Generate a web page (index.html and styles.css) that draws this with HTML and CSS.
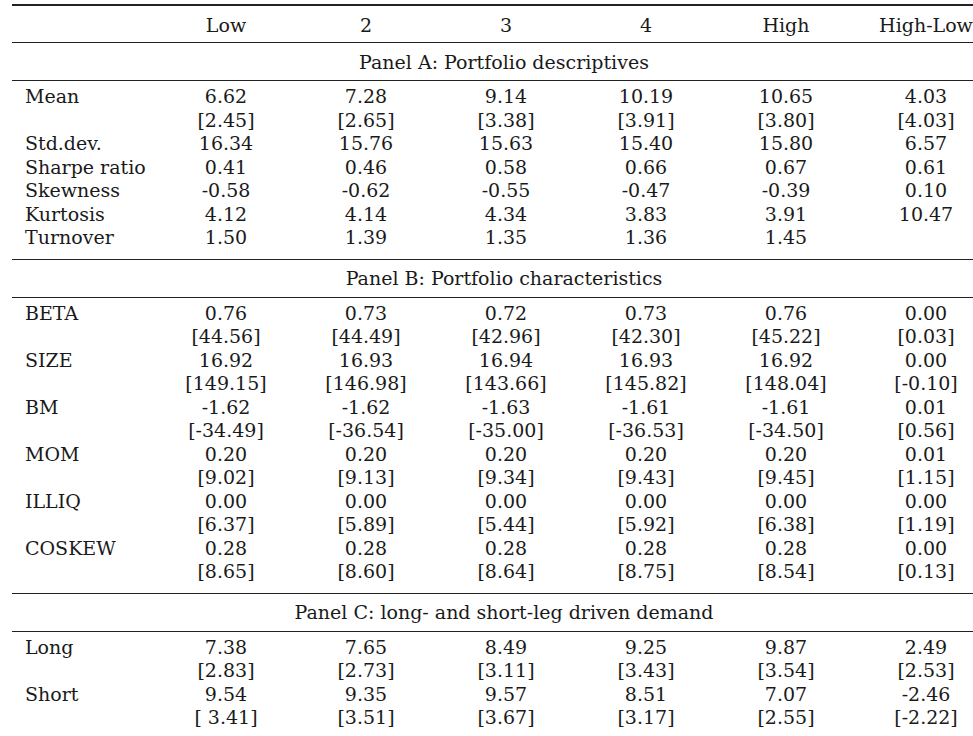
FILE: index.html
```html
<!DOCTYPE html>
<html>
<head>
<meta charset="utf-8">
<link rel="stylesheet" href="styles.css">
</head>
<body>
<table class="results">
  <colgroup>
    <col class="c-label"><col class="c-num"><col class="c-num"><col class="c-num"><col class="c-num"><col class="c-num"><col class="c-num">
  </colgroup>
  <tbody>
    <tr class="head">
      <td class="lbl"></td><td>Low</td><td>2</td><td>3</td><td>4</td><td>High</td><td class="hl">High-Low</td>
    </tr>
    <tr class="panel"><td colspan="7">Panel A: Portfolio descriptives</td></tr>
    <tr class="first"><td class="lbl">Mean</td><td>6.62</td><td>7.28</td><td>9.14</td><td>10.19</td><td>10.65</td><td>4.03</td></tr>
    <tr><td class="lbl"></td><td>[2.45]</td><td>[2.65]</td><td>[3.38]</td><td>[3.91]</td><td>[3.80]</td><td>[4.03]</td></tr>
    <tr><td class="lbl">Std.dev.</td><td>16.34</td><td>15.76</td><td>15.63</td><td>15.40</td><td>15.80</td><td>6.57</td></tr>
    <tr><td class="lbl">Sharpe ratio</td><td>0.41</td><td>0.46</td><td>0.58</td><td>0.66</td><td>0.67</td><td>0.61</td></tr>
    <tr><td class="lbl">Skewness</td><td>-0.58</td><td>-0.62</td><td>-0.55</td><td>-0.47</td><td>-0.39</td><td>0.10</td></tr>
    <tr><td class="lbl">Kurtosis</td><td>4.12</td><td>4.14</td><td>4.34</td><td>3.83</td><td>3.91</td><td>10.47</td></tr>
    <tr class="last"><td class="lbl">Turnover</td><td>1.50</td><td>1.39</td><td>1.35</td><td>1.36</td><td>1.45</td><td></td></tr>

    <tr class="panel"><td colspan="7">Panel B: Portfolio characteristics</td></tr>
    <tr class="first"><td class="lbl">BETA</td><td>0.76</td><td>0.73</td><td>0.72</td><td>0.73</td><td>0.76</td><td>0.00</td></tr>
    <tr><td class="lbl"></td><td>[44.56]</td><td>[44.49]</td><td>[42.96]</td><td>[42.30]</td><td>[45.22]</td><td>[0.03]</td></tr>
    <tr><td class="lbl">SIZE</td><td>16.92</td><td>16.93</td><td>16.94</td><td>16.93</td><td>16.92</td><td>0.00</td></tr>
    <tr><td class="lbl"></td><td>[149.15]</td><td>[146.98]</td><td>[143.66]</td><td>[145.82]</td><td>[148.04]</td><td>[-0.10]</td></tr>
    <tr><td class="lbl">BM</td><td>-1.62</td><td>-1.62</td><td>-1.63</td><td>-1.61</td><td>-1.61</td><td>0.01</td></tr>
    <tr><td class="lbl"></td><td>[-34.49]</td><td>[-36.54]</td><td>[-35.00]</td><td>[-36.53]</td><td>[-34.50]</td><td>[0.56]</td></tr>
    <tr><td class="lbl">MOM</td><td>0.20</td><td>0.20</td><td>0.20</td><td>0.20</td><td>0.20</td><td>0.01</td></tr>
    <tr><td class="lbl"></td><td>[9.02]</td><td>[9.13]</td><td>[9.34]</td><td>[9.43]</td><td>[9.45]</td><td>[1.15]</td></tr>
    <tr><td class="lbl">ILLIQ</td><td>0.00</td><td>0.00</td><td>0.00</td><td>0.00</td><td>0.00</td><td>0.00</td></tr>
    <tr><td class="lbl"></td><td>[6.37]</td><td>[5.89]</td><td>[5.44]</td><td>[5.92]</td><td>[6.38]</td><td>[1.19]</td></tr>
    <tr><td class="lbl">COSKEW</td><td>0.28</td><td>0.28</td><td>0.28</td><td>0.28</td><td>0.28</td><td>0.00</td></tr>
    <tr class="last"><td class="lbl"></td><td>[8.65]</td><td>[8.60]</td><td>[8.64]</td><td>[8.75]</td><td>[8.54]</td><td>[0.13]</td></tr>

    <tr class="panel"><td colspan="7">Panel C: long- and short-leg driven demand</td></tr>
    <tr class="first"><td class="lbl">Long</td><td>7.38</td><td>7.65</td><td>8.49</td><td>9.25</td><td>9.87</td><td>2.49</td></tr>
    <tr><td class="lbl"></td><td>[2.83]</td><td>[2.73]</td><td>[3.11]</td><td>[3.43]</td><td>[3.54]</td><td>[2.53]</td></tr>
    <tr><td class="lbl">Short</td><td>9.54</td><td>9.35</td><td>9.57</td><td>8.51</td><td>7.07</td><td>-2.46</td></tr>
    <tr class="end"><td class="lbl"></td><td>[ 3.41]</td><td>[3.51]</td><td>[3.67]</td><td>[3.17]</td><td>[2.55]</td><td>[-2.22]</td></tr>
  </tbody>
</table>
</body>
</html>
```

FILE: styles.css
```css
html, body {
  margin: 0;
  padding: 0;
  background: #ffffff;
  overflow: hidden;
}

body {
  font-family: "DejaVu Serif", "Liberation Serif", serif;
  font-size: 19px;
  letter-spacing: 0;
  color: #1a1a1a;
}

.results {
  margin: 4px 0 0 12px;
  width: 984px;
  table-layout: fixed;
  border-collapse: separate;
  border-spacing: 0;
}

.c-label { width: 144px; }
.c-num { width: 140px; }

.results td {
  padding: 0;
  line-height: 23.5px;
  text-align: center;
  white-space: pre;
  vertical-align: top;
}

.results td.lbl {
  text-align: left;
  padding-left: 13px;
}

.head td {
  border-top: 2px solid #222222;
  border-bottom: 1px solid #222222;
  padding-top: 7.5px;
  padding-bottom: 5px;
}

.panel td {
  padding-top: 7.5px;
  padding-bottom: 6px;
  border-bottom: 1px solid #222222;
}

.first td {
  padding-top: 4px;
}

.last td {
  padding-bottom: 9px;
  border-bottom: 1px solid #222222;
}
```
